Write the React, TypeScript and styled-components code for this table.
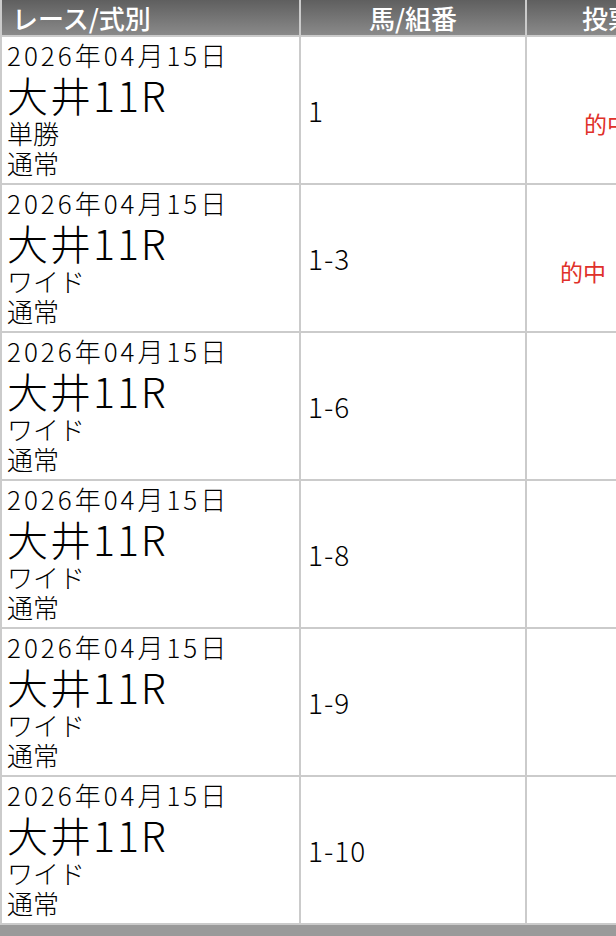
import React from "react";
import styled, { createGlobalStyle } from "styled-components";

const Global = createGlobalStyle`
  html, body { margin: 0; padding: 0; background: #fff; overflow: hidden; }
  body { font-family: "Noto Sans CJK JP", "Noto Sans", sans-serif; color: #000; }
`;

const Page = styled.div`
  width: 616px;
  height: 936px;
  overflow: hidden;
  background: #9a9a9a;
`;

const Table = styled.div`
  display: grid;
  grid-template-columns: 297px 224px 320px;
  grid-auto-rows: 146px;
  grid-template-rows: 35px;
  gap: 2px;
  padding: 0 0 2px 2px;
  background: #cbcbcb;
  width: max-content;
`;

const HeadCell = styled.div<{ $align?: "left" | "center"; $pad?: number }>`
  background: linear-gradient(#5f5f5f, #8a8a8a);
  color: #fff;
  font-size: 26px;
  font-weight: 500;
  line-height: 35px;
  text-align: ${(p) => p.$align ?? "center"};
  padding-left: ${(p) => p.$pad ?? 0}px;
  white-space: nowrap;
  overflow: hidden;
`;

const Cell = styled.div`
  background: #fff;
  display: flex;
  flex-direction: column;
  font-weight: 300;
`;

const RaceCell = styled(Cell)`
  padding: 3px 0 0 5px;
`;

const Small = styled.div<{ $spacing?: number }>`
  font-size: 26px;
  line-height: 30px;
  letter-spacing: ${(p) => p.$spacing ?? 0}px;
  white-space: nowrap;
`;

const Big = styled.div`
  font-size: 41px;
  line-height: 48px;
  letter-spacing: 2px;
  white-space: nowrap;
`;

const NumCell = styled(Cell)`
  justify-content: center;
  padding-left: 7px;
  font-size: 28px;
  letter-spacing: 1px;
`;

const ResultCell = styled(Cell)<{ $pad: number }>`
  justify-content: center;
  padding: 26px 0 0 ${(p) => p.$pad}px;
  color: #e0302a;
  font-size: 23px;
  font-weight: 400;
  white-space: nowrap;
`;

type Row = { kind: string; num: string; result?: string; pad?: number };

const rows: Row[] = [
  { kind: "単勝", num: "1", result: "的中", pad: 57 },
  { kind: "ワイド", num: "1-3", result: "的中", pad: 33 },
  { kind: "ワイド", num: "1-6" },
  { kind: "ワイド", num: "1-8" },
  { kind: "ワイド", num: "1-9" },
  { kind: "ワイド", num: "1-10" },
];

export default function App() {
  return (
    <Page>
      <Global />
      <Table>
        <HeadCell $align="left" $pad={10}>レース/式別</HeadCell>
        <HeadCell>馬/組番</HeadCell>
        <HeadCell $align="left" $pad={55}>投票内容</HeadCell>
        {rows.map((r, i) => (
          <React.Fragment key={i}>
            <RaceCell>
              <Small $spacing={3}>2026年04月15日</Small>
              <Big>大井11R</Big>
              <Small>{r.kind}</Small>
              <Small>通常</Small>
            </RaceCell>
            <NumCell>{r.num}</NumCell>
            <ResultCell $pad={r.pad ?? 0}>{r.result ?? ""}</ResultCell>
          </React.Fragment>
        ))}
      </Table>
    </Page>
  );
}
